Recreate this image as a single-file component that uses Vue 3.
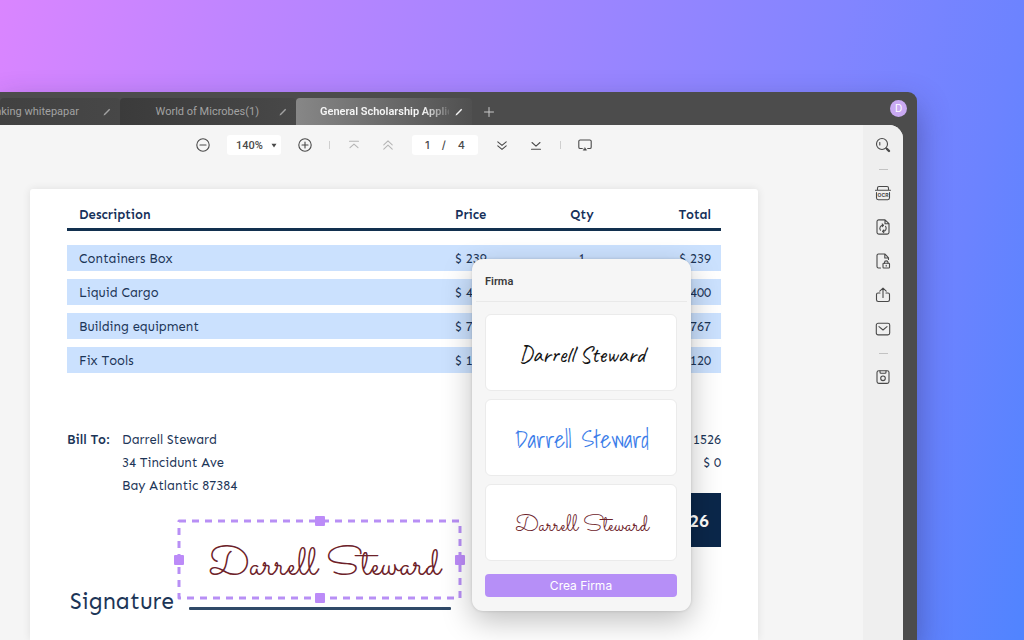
<script setup>
const rows = [
  { name: 'Containers Box', price: '$ 239', qty: 1, total: '$ 239' },
  { name: 'Liquid Cargo', price: '$ 400', qty: '', total: '$ 400' },
  { name: 'Building equipment', price: '$ 767', qty: '', total: '$ 767' },
  { name: 'Fix Tools', price: '$ 120', qty: '', total: '$ 120' },
]
const tabs = [
  { title: 'nking whitepapar', kind: 'first' },
  { title: 'World of Microbes(1)', kind: 'second' },
  { title: 'General Scholarship Applic', kind: 'active' },
]
const signer = 'Darrell Steward'
const styles = ['ink', 'blue', 'wine']
</script>

<template>
  <main class="desktop">
    <section class="window">
      <header class="titlebar">
        <nav class="tabs" aria-label="Documents">
          <button v-for="t in tabs" :key="t.kind" class="tab" :class="t.kind">
            <span class="tab-title">{{ t.title }}</span>
            <svg class="pen" viewBox="0 0 8 8"><path d="M.6 7.400 1 6 6.200.8 7.200 1.800 2 7Z" fill="currentColor" /></svg>
          </button>
        </nav>
        <button class="add" aria-label="New tab">
          <svg viewBox="0 0 10 10"><path d="M5 .5v9M.5 5h9" /></svg>
        </button>
        <button class="avatar">D</button>
      </header>

      <div class="content">
        <div class="viewer">
          <div class="toolbar">
            <button class="tool" aria-label="Zoom out">
              <svg viewBox="0 0 14 14"><circle cx="7" cy="7" r="6.2" /><path d="M4 7h6" /></svg>
            </button>
            <button class="zoom">140% <svg viewBox="0 0 6 5"><path d="M.5.8h5L3 4.4Z" /></svg></button>
            <button class="tool" aria-label="Zoom in">
              <svg viewBox="0 0 14 14"><circle cx="7" cy="7" r="6.2" /><path d="M4 7h6M7 4v6" /></svg>
            </button>
            <i class="sep"></i>
            <button class="tool dim" aria-label="First page">
              <svg viewBox="0 0 14 14"><path d="M2.5 3.3h9M3 9.7l4-3.6 4 3.6" /></svg>
            </button>
            <button class="tool dim" aria-label="Previous page">
              <svg viewBox="0 0 14 14"><path d="m2.8 6.8 4.2-4 4.2 4M2.8 11.2l4.2-4 4.2 4" /></svg>
            </button>
            <div class="pager"><span>1</span><span>/</span><span>4</span></div>
            <button class="tool" aria-label="Next page">
              <svg viewBox="0 0 14 14"><path d="m2.8 3.8 4.2 3.600 4.2-3.600M2.8 7.800l4.2 3.600 4.2-3.600" /></svg>
            </button>
            <button class="tool" aria-label="Last page">
              <svg viewBox="0 0 14 14"><path d="m3 4.500 4 3.7 4-3.700M2.5 11.300h9" /></svg>
            </button>
            <i class="sep"></i>
            <button class="tool" aria-label="Present">
              <svg viewBox="0 0 14 14"><path d="M4.3 10.5H2.2C1.3 10.5.8 10 .8 9.200V3.300C.8 2.400 1.300 2 2.200 2h9.600c.9 0 1.400.4 1.400 1.300v5.900c0 .8-.5 1.300-1.400 1.300H9.700" /><path d="M7 9.800 8.600 12.200H5.400Z" fill="currentColor" stroke-width=".5" /></svg>
            </button>
          </div>

          <article class="page">
            <table>
              <thead>
                <tr><th class="desc">Description</th><th class="price">Price</th><th class="qty">Qty</th><th class="total">Total</th></tr>
              </thead>
              <tbody>
                <tr v-for="r in rows" :key="r.name">
                  <td>{{ r.name }}</td><td>{{ r.price }}</td><td class="qty">{{ r.qty }}</td><td class="total">{{ r.total }}</td>
                </tr>
              </tbody>
            </table>

            <div class="billing">
              <strong>Bill To:</strong>
              <address>{{ signer }}<br />34 Tincidunt Ave<br />Bay Atlantic 87384</address>
              <div class="sums">
                <p>$ 1526</p>
                <p>$ 0</p>
                <div class="due">$ 1526</div>
              </div>
            </div>

            <div class="sign-row"><span>Signature</span><i class="line"></i></div>

            <div class="selection">
              <svg class="frame"><rect x="0" y="0" width="100%" height="100%" /></svg>
              <span class="script wine big">{{ signer }}</span>
              <i class="grip n"></i><i class="grip s"></i><i class="grip w"></i><i class="grip e"></i>
            </div>

            <aside class="popover">
              <h2>Firma</h2>
              <div class="choices">
                <button v-for="s in styles" :key="s" class="choice" :class="{ low: s === 'wine' }"><span class="script" :class="s">{{ signer }}</span></button>
                <button class="create">Crea Firma</button>
              </div>
            </aside>
          </article>
        </div>

        <nav class="rail" aria-label="Tools">
          <button aria-label="Search">
            <svg viewBox="0 0 16 16"><circle cx="7" cy="7" r="5.500" /><path d="M4.800 5.600v2.400" /><path d="m11 11 1 1" /><path d="m12 12 2 2" stroke-width="2.400" /></svg>
          </button>
          <i></i>
          <button aria-label="OCR">
            <svg viewBox="0 0 16 16"><path d="M2.500 5V3c0-1 .5-1.500 1.500-1.500h8c1 0 1.500.5 1.500 1.500v2M.5 5.300h15M1.500 7.500v5.300c0 1 .6 1.900 1.700 1.900h9.600c1.100 0 1.700-.9 1.700-1.900V7.500" /><text x="8" y="12" text-anchor="middle">OCR</text></svg>
          </button>
          <button aria-label="Convert">
            <svg viewBox="0 0 16 16"><path d="M10 .9H3.800C2.700.9 2 1.500 2 2.500v11c0 1 .7 1.600 1.800 1.600h8.400c1.100 0 1.800-.6 1.800-1.600V4.700ZM10 1v3.700h4" /><path d="M5.400 11.200A3.100 3.100 0 0 1 8 6.300M7.200 5 8.500 6.300 7.200 7.600M10.600 7.400A3.100 3.100 0 0 1 8 12.300M8.800 11 7.500 12.300l1.300 1.300" /></svg>
          </button>
          <button aria-label="Protect">
            <svg viewBox="0 0 16 16"><path d="M5.500 15H3.500C2.500 15 2 14.500 2 13.500v-11C2 1.500 2.500 1 3.500 1H10l3.500 3.800V6.500M9.800 1v4h3.700" /><rect x="8" y="10.300" width="6.500" height="4.700" rx=".8" /><path d="M9.500 10.200V9.500c0-2.200 3.500-2.200 3.500 0v.7M11.200 12.300v.8" /></svg>
          </button>
          <button aria-label="Share">
            <svg viewBox="0 0 16 16"><path d="M5 6H3C2 6 1.500 6.600 1.500 7.500v5.300c0 1.100.6 1.700 1.700 1.700h9.600c1.100 0 1.700-.6 1.700-1.700V7.500c0-.9-.5-1.500-1.500-1.500h-2M8 10.500V1.300M4.800 4.200 8 1.200l3.200 3" /></svg>
          </button>
          <button aria-label="Mail">
            <svg viewBox="0 0 16 16"><rect x="1.300" y="2.300" width="13.400" height="11.600" rx="1.800" /><path d="M4 5.700 8 9l4-3.300" /></svg>
          </button>
          <i></i>
          <button aria-label="Save">
            <svg viewBox="0 0 16 16"><rect x="2" y="1.800" width="12" height="12.600" rx="1.800" /><path d="M5 2v1.300c0 .7.300 1 1 1h4c.7 0 1-.3 1-1V2" /><circle cx="8" cy="9.300" r="2.300" /></svg>
          </button>
        </nav>
      </div>
    </section>
  </main>
</template>

<style>
body { margin: 0; }
</style>

<style scoped>
* { box-sizing: border-box; }
button { border: 0; padding: 0; margin: 0; background: none; color: inherit; font: inherit; cursor: pointer; }
svg { display: block; fill: none; stroke: currentColor; stroke-linecap: round; stroke-linejoin: round; }

.desktop {
  display: flex;
  min-height: 100vh;
  padding: 92px 107px 0 0;
  overflow: hidden;
  font-family: Inter, "Liberation Sans", sans-serif;
  background: linear-gradient(105deg, #da85ff 0%, #bf85ff 20%, #a485ff 43%, #8285ff 71%, #6c83ff 86%, #5084ff 100%);
}
.window {
  flex: 1;
  min-width: 0;
  display: flex;
  flex-direction: column;
  padding-right: 14px;
  border-radius: 0 9px 0 0;
  background: #4c4c4c;
  box-shadow: 0 14px 32px rgba(40, 40, 90, .45);
}
.titlebar { display: flex; height: 33px; align-items: center; }
.tabs { display: flex; align-self: stretch; padding-top: 6px; }
.tab {
  display: flex;
  align-items: center;
  width: 176px;
  padding: 0 9px 0 24px;
  gap: 6px;
  border-radius: 4px 4px 0 0;
  color: #a2a2a2;
  font-family: Roboto, Inter, sans-serif;
  font-size: 11px;
  line-height: 16px;
}
.tab-title { flex: 1; min-width: 0; white-space: nowrap; text-align: left; }
.pen { flex: none; width: 8px; height: 8px; stroke: none; }
.first { width: 120px; padding-left: 0; background: linear-gradient(90deg, #414141, #474747); }
.first .tab-title { display: flex; justify-content: flex-end; padding-right: 18px; }
.second { background: linear-gradient(90deg, #3b3b3b, #484848); }
.second .tab-title { text-align: right; padding-right: 14px; }
.active { color: #f5f5f5; font-weight: 600; background: linear-gradient(90deg, #878787, #505050); }
.active .tab-title { mask-image: linear-gradient(90deg, #000 80%, rgba(0, 0, 0, .15) 100%); }
.add { width: 10px; margin: 6px 0 0 12px; color: #c9c9c9; }
.avatar { width: 17px; height: 17px; margin-left: auto; margin-right: -4px; border-radius: 50%; background: #c9a9f2; color: #fff; font-size: 10px; line-height: 17px; }

.content { flex: 1; display: flex; border-radius: 0 14px 0 0; overflow: hidden; background: #f5f5f5; }
.viewer { flex: 1; min-width: 0; display: flex; flex-direction: column; }
.toolbar { display: flex; align-items: center; height: 40px; padding-left: 196px; gap: 17px; color: #4a4a4a; }
.tool { width: 14px; }
.tool svg { width: 14px; height: 14px; stroke-width: 1.1; }
.tool.dim { color: #b5b5b5; }
.toolbar .tool + .tool { margin-left: 3px; }
.zoom { display: flex; align-items: center; justify-content: space-between; width: 54px; height: 20px; padding: 0 4px 0 9px; border-radius: 3px; background: #fff; font-family: Roboto, Inter, sans-serif; font-size: 11px; font-weight: 500; }
.zoom svg { width: 6px; height: 5px; fill: currentColor; stroke: none; }
.sep { width: 1px; height: 8px; background: #cfcfcf; }
.pager { display: flex; align-items: center; justify-content: space-between; width: 66px; height: 20px; padding: 0 13px; border-radius: 3px; background: #fff; font-size: 11px; font-weight: 500; }

.page {
  position: relative;
  flex: 1;
  margin: 24px 105px 0 30px;
  padding: 12px 37px 0;
  border-radius: 3px 3px 0 0;
  background: #fff;
  box-shadow: 0 0 8px rgba(0, 0, 0, .09);
  color: #1c3557;
  font-family: Sen, "Noto Sans", "Open Sans", sans-serif;
  font-size: 13px;
}
table { width: 100%; border-spacing: 0; table-layout: fixed; }
th { height: 30px; padding: 0; border-bottom: 3px solid #12304f; text-align: left; font-weight: 600; color: #16305a; }
td { height: 34px; padding: 1px 0 0; border-top: 8px solid #fff; background: #cbe1fe; line-height: 25px; }
tbody tr:first-child td { height: 40px; border-top-width: 14px; }
th:first-child, td:first-child { padding-left: 12px; }
.price { width: 100px; }
.desc { width: 388px; }
th.qty, td.qty { width: 54px; text-align: center; }
th.total, td.total { text-align: right; padding-right: 10px; }

.billing { display: flex; margin-top: 55px; line-height: 23px; }
.billing strong { width: 55px; white-space: nowrap; font-weight: 600; }
address { font-style: normal; }
.sums { margin-left: auto; width: 150px; text-align: right; }
.sums p { margin: 0; }
.due { height: 54px; margin-top: 19px; padding-right: 12px; background: #0b274a; color: #fff; font-size: 18px; font-weight: 600; line-height: 56px; }
.sign-row { display: flex; align-items: center; justify-content: space-between; width: 384px; margin-top: 37px; padding-left: 3px; font-size: 23px; line-height: 34px; }
.line { width: 262px; height: 3px; margin-top: 14px; background: #304a68; border-radius: 1px; }

.selection { position: absolute; left: 149px; top: 332px; width: 281px; height: 77px; display: grid; place-items: center; }
.frame { position: absolute; inset: 0; width: 100%; height: 100%; overflow: visible; stroke: #b88ff5; stroke-linecap: butt; }
.frame rect { stroke-dasharray: 7 6; stroke-width: 3px; }
.grip { position: absolute; width: 10px; height: 10px; border-radius: 1px; background: #bc8bf8; }
.n, .s { left: calc(50% - 5px); }
.n { top: -5px; }
.s { bottom: -5px; }
.w, .e { top: calc(50% - 5px); }
.w { left: -5px; }
.e { right: -5px; }

.script { white-space: nowrap; line-height: 1; }
.ink { font-family: Caveat, Lato, cursive; font-size: 23px; color: #151515; }
.blue { font-family: "Shadows Into Light", Lato, cursive; font-size: 23px; color: #3b7de9; }
.wine { font-family: Sacramento, Lato, cursive; font-size: 23px; color: #6d2229; }
.script.big { font-size: 40px; padding: 12px 0 0 10px; }

.popover {
  position: absolute;
  top: 70px;
  right: 67px;
  width: 219px;
  padding: 0 4px 14px;
  border-radius: 11px;
  background: #f6f6f6;
  box-shadow: 0 10px 30px rgba(0, 0, 0, .25), 0 0 3px rgba(0, 0, 0, .15);
  font-family: Inter, "Liberation Sans", sans-serif;
}
h2 { margin: 0; padding: 4px 9px 0; height: 43px; border-bottom: 1px solid #e9e9e9; color: #3b3b3b; font-family: Roboto, Inter, sans-serif; font-size: 11px; line-height: 38px; font-weight: 600; }
.choices { display: flex; flex-direction: column; gap: 8px; padding: 12px 10px 0 9px; }
.choice { height: 77px; padding: 4px 0 0 2px; border: 1px solid #ebebeb; border-radius: 6px; background: #fff; }
.choice.low { padding-top: 8px; }
.create { height: 23px; margin-top: 5px; border-radius: 4px; background: #b68ff7; color: #fff; font-size: 12px; }

.rail { width: 40px; display: flex; flex-direction: column; align-items: center; padding-top: 12px; background: #efefef; color: #494949; }
.rail button { width: 16px; height: 16px; margin-bottom: 18px; }
.rail svg { width: 16px; height: 16px; stroke-width: 1.1; }
.rail text { font: bold 5px Inter, sans-serif; fill: currentColor; stroke: none; }
.rail i { width: 9px; height: 1px; margin: -2px 0 15px; background: #c3c3c3; }
</style>
